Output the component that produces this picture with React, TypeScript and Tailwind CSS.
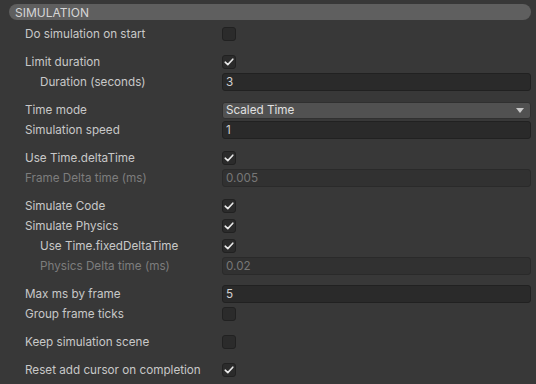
import React from "react";

type Row =
  | { kind: "check"; label: string; checked: boolean; indent?: boolean; gap?: boolean }
  | { kind: "field"; label: string; value: string; indent?: boolean; disabled?: boolean; gap?: boolean }
  | { kind: "select"; label: string; value: string; gap?: boolean };

const rows: Row[] = [
  { kind: "check", label: "Do simulation on start", checked: false },
  { kind: "check", label: "Limit duration", checked: true, gap: true },
  { kind: "field", label: "Duration (seconds)", value: "3", indent: true },
  { kind: "select", label: "Time mode", value: "Scaled Time", gap: true },
  { kind: "field", label: "Simulation speed", value: "1" },
  { kind: "check", label: "Use Time.deltaTime", checked: true, gap: true },
  { kind: "field", label: "Frame Delta time (ms)", value: "0.005", disabled: true },
  { kind: "check", label: "Simulate Code", checked: true, gap: true },
  { kind: "check", label: "Simulate Physics", checked: true },
  { kind: "check", label: "Use Time.fixedDeltaTime", checked: true, indent: true },
  { kind: "field", label: "Physics Delta time (ms)", value: "0.02", indent: true, disabled: true },
  { kind: "field", label: "Max ms by frame", value: "5", gap: true },
  { kind: "check", label: "Group frame ticks", checked: false },
  { kind: "check", label: "Keep simulation scene", checked: false, gap: true },
  { kind: "check", label: "Reset add cursor on completion", checked: true, gap: true },
];

const Check = ({ checked }: { checked: boolean }) => (
  <div className="w-[14px] h-[14px] rounded-[3px] bg-[#2b2b2b] border border-[#212121] flex items-center justify-center">
    {checked && (
      <svg width="10" height="8" viewBox="0 0 10 8">
        <path d="M1.2 4.2 L3.8 6.6 L8.8 1.2" stroke="#e8e8e8" strokeWidth="1.6" fill="none" strokeLinecap="round" strokeLinejoin="round" />
      </svg>
    )}
  </div>
);

export default function App() {
  return (
    <div className="w-[536px] h-[384px] bg-[#383838] overflow-hidden text-[11.7px] leading-none" style={{ fontFamily: "Inter, 'Noto Sans', sans-serif" }}>
      <div className="pt-[4px] pl-[9px] pr-[5px]">
        <div className="h-[16px] rounded-full bg-[#5f5f5f] flex items-center pl-[6px] pt-[1px] text-[#d6d6d6] text-[12px]">SIMULATION</div>
      </div>
      <div className="pt-[4px] pl-[25px] pr-[5px] flex flex-col">
        {rows.map((r, i) => {
          const labelColor = r.kind === "field" && r.disabled ? "text-[#7d7d7d]" : "text-[#c8c8c8]";
          return (
            <div key={i} className={`h-[20px] flex items-center ${r.gap ? "mt-[8px]" : ""}`}>
              <div className={`w-[197px] pt-[2px] ${r.indent ? "pl-[15px]" : ""} ${labelColor}`}>{r.label}</div>
              <div className="flex-1 flex items-center">
                {r.kind === "check" && <Check checked={r.checked} />}
                {r.kind === "field" && (
                  <div
                    className={`w-full h-[18px] rounded-[3px] border flex items-center pl-[3px] pt-[1px] ${
                      r.disabled ? "bg-[#313131] border-[#2a2a2a] text-[#777777]" : "bg-[#2a2a2a] border-[#212121] text-[#d2d2d2]"
                    }`}
                  >
                    {r.value}
                  </div>
                )}
                {r.kind === "select" && (
                  <div className="w-full h-[17px] rounded-[3px] border border-[#303030] bg-[#515151] flex items-center justify-between pl-[3px] pr-[6px] text-[#e0e0e0]">
                    <span className="pt-[1px]">{r.value}</span>
                    <svg width="8" height="5" viewBox="0 0 8 5">
                      <path d="M0 0 L8 0 L4 5 Z" fill="#c8c8c8" />
                    </svg>
                  </div>
                )}
              </div>
            </div>
          );
        })}
      </div>
    </div>
  );
}
